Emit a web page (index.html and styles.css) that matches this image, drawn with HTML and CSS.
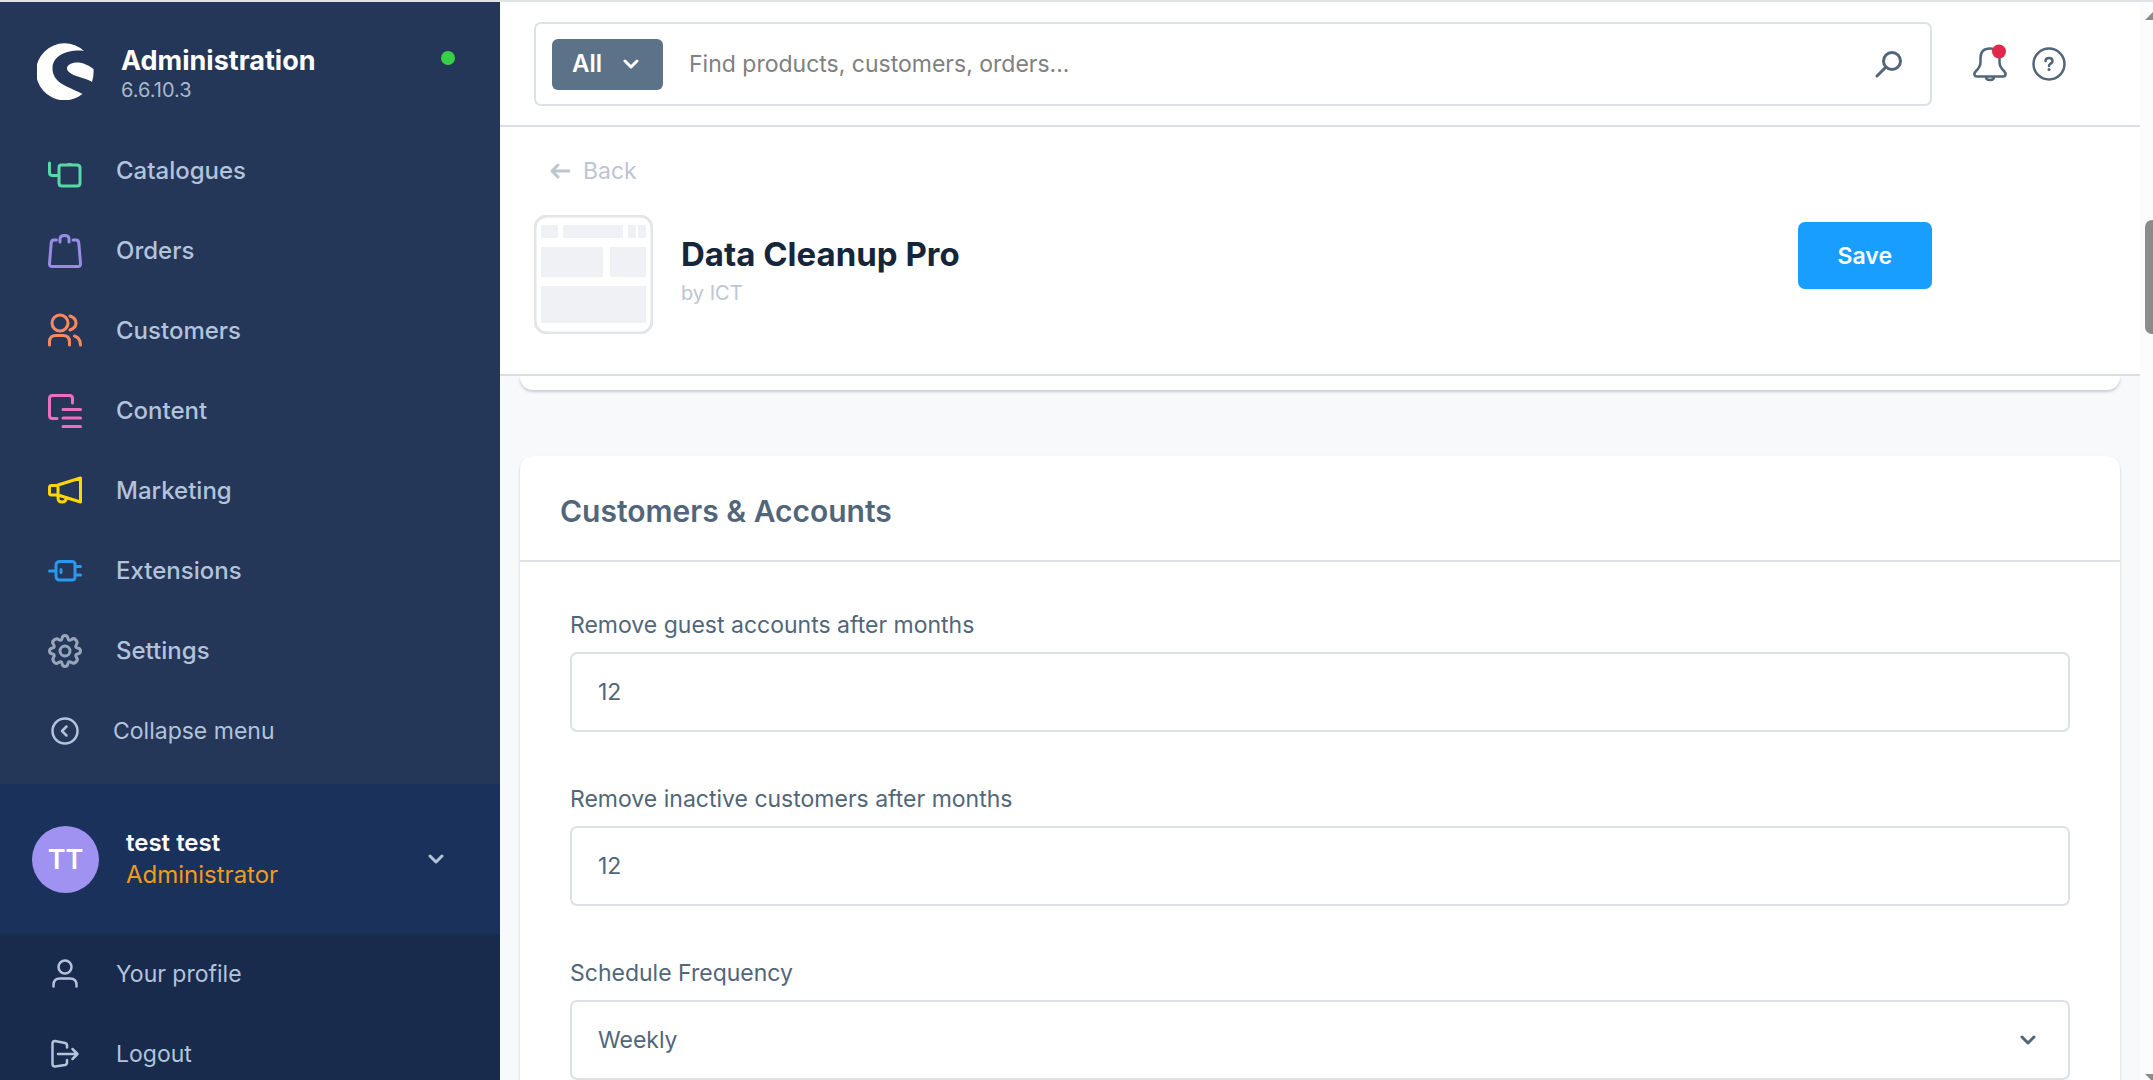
FILE: index.html
```html
<!DOCTYPE html>
<html lang="en">
<head>
<meta charset="utf-8">
<title>Data Cleanup Pro | Administration</title>
<link rel="stylesheet" href="styles.css">
</head>
<body>
<div class="app">
  <aside class="sidebar">
    <header class="brand">
      <svg class="brand-logo" viewBox="0 0 57 57" aria-hidden="true"><path fill="#fff" d="M47 8C36 6 15 10 15.500 26C16 41 33 44 45.500 51A28.500 28.500 0 1 1 47 8ZM55 39C48 34 30 33 30 25C31 19 44 16 56.500 26Q57 33 55 39Z"/></svg>
      <div class="brand-text">
        <strong class="brand-name">Administration</strong>
        <span class="brand-version">6.6.10.3</span>
      </div>
      <span class="brand-status"></span>
    </header>
    <nav class="menu">
      <a class="menu-item" href="#"><svg class="icon green" viewBox="0 0 34 34"><path d="M1.500 9v9.500q0 3 3 3H10M13.500 11h15.500q3 0 3 3v15q0 3-3 3H14q-3 0-3-3V13.500q0-2.500 2.500-2.500M20 10.500h3"/></svg>Catalogues</a>
      <a class="menu-item" href="#"><svg class="icon violet" viewBox="0 0 34 34"><path d="M12 8V5q0-3.500 4.500-3.500T21 5v3M8.500 6H6Q3.500 6 3.200 9L1.500 29.500Q1.300 32.500 4 32.500H30Q32.700 32.500 32.500 29.500L30.800 9Q30.500 6 28 6H25"/></svg>Orders</a>
      <a class="menu-item" href="#"><svg class="icon coral" viewBox="0 0 34 34"><circle cx="12" cy="9" r="8"/><path d="M1.500 31V28q0-6.500 6.500-6.500h7q6.500 0 6.500 6.500v3M22 2q6 2 6 7t-6 7M26.500 22q6 2 6 9"/></svg>Customers</a>
      <a class="menu-item" href="#"><svg class="icon pink" viewBox="0 0 34 34"><path d="M24.500 9V4.500q0-3-3-3h-17q-3 0-3 3v17q0 3 3 3H9M15 15.500h17.500M15 24h17.500M15 32.500h17.500"/></svg>Content</a>
      <a class="menu-item" href="#"><svg class="icon yellow" viewBox="0 0 34 34"><path d="M10 11L32.500 4V28L10 21ZM10 11.500H3.500Q1.500 11.500 1.500 13.500v5.500q0 2 2 2H10M10 21v3q0 4 4 4t4.500-4.500"/></svg>Marketing</a>
      <a class="menu-item" href="#"><svg class="icon blue" viewBox="0 0 34 34"><path d="M1.500 17H8M12 7.500H24q3 0 3 3V23q0 3-3 3H12q-4 0-4-4V11.500q0-4 4-4M13 15.500v3M27 12.500h5.500M27 21h5.500"/></svg>Extensions</a>
      <a class="menu-item" href="#"><svg class="icon grey" viewBox="0 0 34 34"><circle cx="17" cy="17" r="5"/><path d="M14 4.500Q14.500 1.500 17 1.500T20 4.500Q20.500 7.500 23.500 5.500Q26 3.500 28 6T28.500 10.500Q26.500 13.500 29.500 14Q32.500 14.500 32.500 17T29.500 20Q26.500 20.500 28.500 23.500Q30.500 26 28 28T23.500 28.500Q20.500 26.500 20 29.500Q19.500 32.500 17 32.500T14 29.500Q13.500 26.500 10.500 28.500Q8 30.500 6 28T5.500 23.500Q7.500 20.500 4.500 20Q1.500 19.500 1.500 17T4.500 14Q7.500 13.500 5.500 10.500Q3.500 8 6 6T10.500 5.500Q13.500 7.500 14 4.500Z"/></svg>Settings</a>
      <button class="menu-item collapse" type="button"><svg class="icon pale" viewBox="0 0 34 34"><circle cx="17" cy="17" r="12.500"/><path d="M18.500 12.500L14 17l4.500 4.500"/></svg>Collapse menu</button>
    </nav>
    <button class="user" type="button">
      <span class="avatar">TT</span>
      <span class="user-text"><strong class="user-name">test test</strong><span class="user-role">Administrator</span></span>
      <svg class="chevron pale" viewBox="0 0 16 10"><path d="M2 2l6 6 6-6"/></svg>
    </button>
    <nav class="user-menu">
      <a class="menu-item light" href="#"><svg class="icon pale" viewBox="0 0 34 34"><circle cx="17" cy="10" r="6.500"/><path d="M5.500 29.500V28q0-6.500 6.500-6.500h10q6.500 0 6.500 6.500v1.500"/></svg>Your profile</a>
      <a class="menu-item light" href="#"><svg class="icon pale" viewBox="0 0 34 34"><path d="M19 10.500V8.500Q19 6.500 17 6L7 4Q4.500 4 4.500 6.500V27Q4.500 29.500 7 29.500L17 28Q19 27.500 19 25.500V23M10 17H29.500M24.500 12l5 5-5 5"/></svg>Logout</a>
    </nav>
  </aside>

  <main class="main">
    <header class="topbar">
      <form class="search">
        <button class="search-scope" type="button">All<svg class="chevron white" viewBox="0 0 16 10"><path d="M2 2l6 6 6-6"/></svg></button>
        <input class="search-input" type="search" aria-label="Search" placeholder="Find products, customers, orders...">
        <button class="plain" type="submit" aria-label="Start search"><svg class="search-icon" viewBox="0 0 27 27"><circle cx="17" cy="10" r="8.500"/><path d="M10.500 16.500L2 25"/></svg></button>
      </form>
      <div class="topbar-actions">
        <button class="plain" type="button" aria-label="Notifications"><svg class="icon slate" viewBox="0 0 34 34"><path d="M17 1.500Q7.500 1.500 7.500 11V15Q7.500 20 3 24Q1 26 1.500 28Q2 29.500 4 29.500H30Q32 29.500 32.500 28Q33 26 31 24Q26.500 20 26.500 15V11Q26.500 1.500 17 1.500M13 30q0 3 4 3t4-3"/><circle class="badge" cx="26" cy="4.500" r="7"/></svg></button>
        <button class="plain" type="button" aria-label="Help"><svg class="icon slate" viewBox="0 0 34 34"><circle cx="17" cy="17" r="15.500"/><path d="M13.500 14q0-3 3.500-3t3.500 3q0 2-2.500 3-1 .5-1 2"/><circle class="dot" cx="17" cy="22.500" r="1.500"/></svg></button>
      </div>
    </header>

    <header class="page-head">
      <a class="back" href="#"><svg class="back-arrow" viewBox="0 0 20 16"><path d="M19 8H2M8 2L2 8l6 6"/></svg>Back</a>
      <div class="page-row">
        <svg class="plugin-icon" viewBox="0 0 119 119" aria-hidden="true"><rect x="1" y="1" width="117" height="117" rx="12" fill="#fff" stroke="#e4e5e7" stroke-width="3"/><path fill="#f0f1f5" d="M7 10H24V23H7ZM29 10H89V23H29ZM94 10h8V23h-8ZM104 10h8V23h-8ZM7 32H69V62H7ZM76 32h36V62H76ZM7 71H112V108H7Z"/></svg>
        <div class="page-title">
          <h1 class="title">Data Cleanup Pro</h1>
          <span class="author">by ICT</span>
        </div>
        <button class="save" type="submit" form="config">Save</button>
      </div>
    </header>

    <form class="content" id="config">
      <section class="card card-end"></section>
      <section class="card">
        <h2 class="card-title">Customers &amp; Accounts</h2>
        <div class="card-body">
          <div class="field">
            <label class="label" for="guest">Remove guest accounts after months</label>
            <input class="control" id="guest" type="text" inputmode="numeric" value="12">
          </div>
          <div class="field">
            <label class="label" for="inactive">Remove inactive customers after months</label>
            <input class="control" id="inactive" type="text" inputmode="numeric" value="12">
          </div>
          <div class="field">
            <label class="label" for="frequency">Schedule Frequency</label>
            <div class="select-wrap">
              <select class="control" id="frequency"><option>Weekly</option></select>
              <svg class="chevron slate select-chevron" viewBox="0 0 16 10"><path d="M2 2l6 6 6-6"/></svg>
            </div>
          </div>
        </div>
      </section>
    </form>
  </main>

  <div class="scrollbar" aria-hidden="true">
    <svg class="scroll-arrow" viewBox="0 0 8 8"><path d="M0 8L8 0V8Z"/></svg>
    <span class="thumb"></span>
    <svg class="scroll-arrow" viewBox="0 0 8 8"><path d="M0 2H8V8H6Z"/></svg>
  </div>
</div>
</body>
</html>
```
FILE: styles.css
```css
* { box-sizing: border-box; }

body {
  margin: 0;
  font-family: Inter, "Liberation Sans", sans-serif;
  font-size: 23px;
  line-height: 32px;
  color: #52667a;
}

button, input, select { font: inherit; color: inherit; }
button { cursor: pointer; }
a { text-decoration: none; }
svg { display: block; flex: none; fill: none; stroke-linecap: round; stroke-linejoin: round; }

.app {
  display: flex;
  height: 100vh;
  overflow: hidden;
  border-top: 2px solid #dfe3e6;
}

/* Sidebar */
.sidebar {
  flex: none;
  display: flex;
  flex-direction: column;
  width: 500px;
  background: #243758;
}
.brand {
  display: flex;
  align-items: flex-start;
  gap: 27px;
  padding: 41px 45px 28px 37px;
}
.brand-logo { width: 57px; height: 57px; }
.brand-text { flex: 1; display: flex; flex-direction: column; padding-top: 2px; }
.brand-name { font-size: 27px; font-weight: 700; line-height: 32px; color: #fff; }
.brand-version { font-size: 20px; line-height: 26px; color: #a9b8cd; }
.brand-status {
  width: 14px;
  height: 14px;
  margin-top: 8px;
  border-radius: 50%;
  background: #37d046;
}
.menu-item {
  display: flex;
  align-items: center;
  gap: 34px;
  width: 100%;
  height: 80px;
  padding: 0 48px;
  border: 0;
  background: none;
  color: #b3c3db;
  font-size: 24px;
  font-weight: 500;
}
.menu-item.collapse { gap: 31px; font-size: 23px; font-weight: 400; }
.menu-item.light { font-size: 23px; font-weight: 400; }

.icon { width: 34px; height: 34px; stroke: currentColor; stroke-width: 3; overflow: visible; }
.green { stroke: #57d9a3; }
.violet { stroke: #9a8be6; }
.coral { stroke: #f88962; }
.pink { stroke: #ee6fc0; }
.yellow { stroke: #ffd700; }
.blue { stroke: #2b98f0; }
.grey { stroke: #98a6bb; }
.pale { stroke: #b3c3db; stroke-width: 2.5; }
.white { stroke: #fff; }
.slate { stroke: #52667a; stroke-width: 2.5; }
.chevron { width: 16px; height: 10px; stroke-width: 3; }

.user {
  display: flex;
  align-items: center;
  gap: 27px;
  min-height: 150px;
  margin-top: auto;
  padding: 0 56px 0 32px;
  border: 0;
  background: #1a315b;
  text-align: left;
}
.avatar {
  width: 67px;
  height: 67px;
  border-radius: 50%;
  background: #a092f0;
  color: #fff;
  font-size: 27px;
  font-weight: 600;
  line-height: 67px;
  text-align: center;
}
.user-text { flex: 1; display: flex; flex-direction: column; font-size: 24px; }
.user-name { font-weight: 600; color: #fff; }
.user-role { color: #f39a1b; }
.user-menu { height: 146px; background: #182b4d; }

/* Main column */
.main {
  flex: 1;
  display: flex;
  flex-direction: column;
  min-width: 0;
  background: #f8f9fb;
}
.topbar {
  flex: none;
  display: flex;
  align-items: center;
  gap: 41px;
  padding: 20px 74px 19px 34px;
  background: #fff;
  border-bottom: 2px solid #dadde3;
}
.search {
  flex: 1;
  display: flex;
  align-items: center;
  height: 84px;
  padding: 0 28px 0 16px;
  border: 2px solid #dde1e6;
  border-radius: 7px;
}
.search-scope {
  display: flex;
  align-items: center;
  gap: 21px;
  height: 51px;
  padding: 0 24px 0 20px;
  border: 0;
  border-radius: 6px;
  background: #5c7289;
  color: #fff;
  font-size: 24px;
  font-weight: 600;
}
.search-input {
  flex: 1;
  min-width: 0;
  margin-left: 26px;
  padding: 0;
  border: 0;
  background: none;
}
.search-input::placeholder { color: #808080; }
.search-icon { width: 27px; height: 27px; stroke: #52667a; stroke-width: 3; }
.plain { padding: 0; border: 0; background: none; }
.topbar-actions { display: flex; gap: 25px; }
.badge { fill: #de294c; stroke: none; }
.dot { fill: #52667a; stroke: none; }

.page-head {
  flex: none;
  padding: 28px 208px 40px 34px;
  background: #fff;
  border-bottom: 2px solid #dadde3;
}
.back {
  display: inline-flex;
  align-items: center;
  gap: 13px;
  padding-left: 16px;
  color: #bdc6d0;
}
.back-arrow { width: 20px; height: 16px; stroke: currentColor; stroke-width: 3; }
.page-row { display: flex; align-items: flex-start; margin-top: 28px; }
.plugin-icon { width: 119px; height: 119px; }
.page-title { flex: 1; padding: 18px 0 0 28px; }
.title { margin: 0; font-size: 33px; font-weight: 700; line-height: 42px; color: #16263a; }
.author { display: block; line-height: 36px; font-size: 20px; color: #bdc6d0; }
.save {
  height: 67px;
  margin-top: 7px;
  padding: 0 40px;
  border: 0;
  border-radius: 7px;
  background: #189eff;
  color: #fff;
  font-weight: 600;
}

.content { flex: 1; min-height: 0; overflow: hidden; padding: 0 20px; }
.card {
  border-radius: 13px;
  background: #fff;
  box-shadow: 0 2px 3px rgba(82, 102, 122, 0.3);
}
.card-end { height: 14px; margin-bottom: 66px; border-radius: 0 0 13px 13px; }
.card-title {
  margin: 0;
  padding: 38px 40px 32px;
  border-bottom: 2px solid #dde0e5;
  font-size: 30px;
  font-weight: 600;
  line-height: 34px;
}
.card-body { display: grid; gap: 51px; padding: 47px 50px; }
.field { display: grid; gap: 11px; }
.label { justify-self: start; }
.control {
  width: 100%;
  height: 80px;
  padding: 0 26px;
  border: 2px solid #dde1e6;
  border-radius: 7px;
  background: #fff;
  appearance: none;
}
.select-wrap { display: grid; align-items: center; }
.select-wrap > * { grid-area: 1 / 1; }
.select-chevron { justify-self: end; margin-right: 34px; pointer-events: none; }

/* Scrollbar */
.scrollbar {
  flex: none;
  display: flex;
  flex-direction: column;
  align-items: flex-end;
  width: 13px;
  padding-top: 10px;
  background: #fcfcfd;
}
.scroll-arrow { width: 8px; height: 8px; fill: #8b8b8b; }
.thumb {
  width: 8px;
  height: 114px;
  margin: 200px 0 auto;
  border-radius: 7px 0 0 7px;
  background: #8b8b8b;
}
```
